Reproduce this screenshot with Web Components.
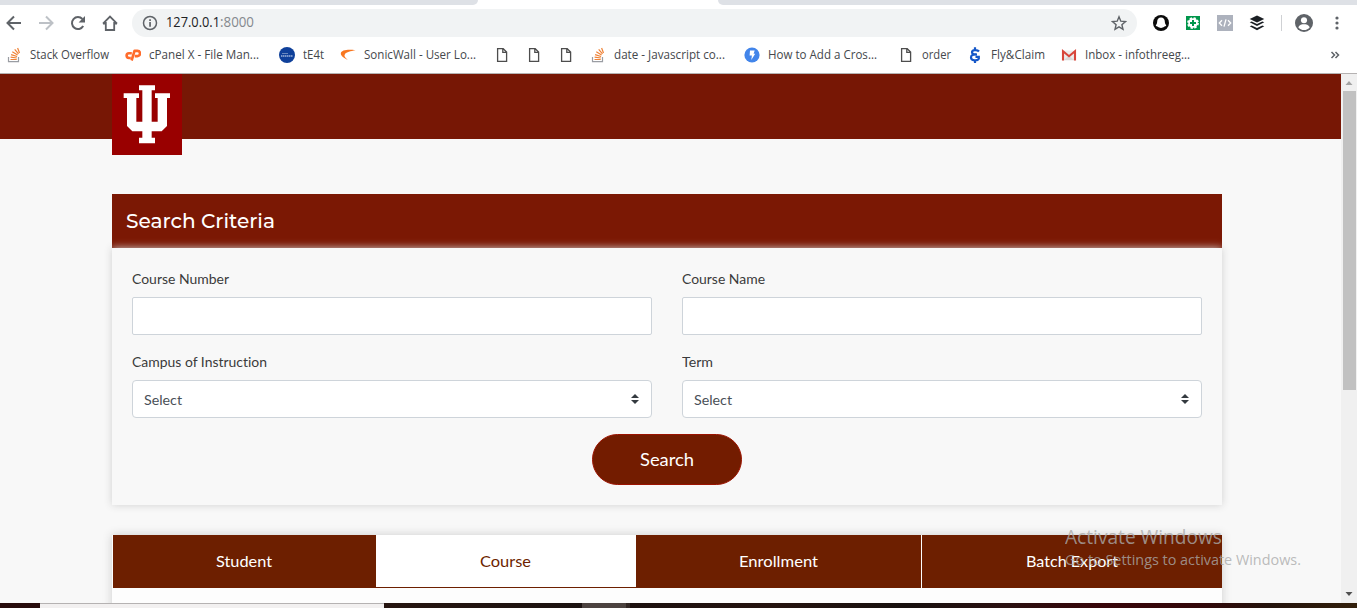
<!DOCTYPE html>
<html lang="en">
<head>
<meta charset="utf-8">
<title>Search Criteria</title>
<style>
html,body{margin:0;height:608px;overflow:hidden;background:#f8f8f8}
</style>
</head>
<body>
<app-window></app-window>
<script>
function define(name, html, setup) {
  const t = document.createElement('template');
  t.innerHTML = html;
  customElements.define(name, class extends HTMLElement {
    connectedCallback() {
      if (this.shadowRoot) return;
      const root = this.attachShadow({ mode: 'open' });
      root.append(t.content.cloneNode(true));
      if (setup) setup.call(this, root);
    }
  });
}

/* Label whose text is condensed or widened to span exactly `w` pixels. */
define('fit-label', `<style>
:host{display:inline-block;white-space:nowrap;flex:none;text-align:left;font-variant-ligatures:none}
span{display:inline-block;transform-origin:0 50%}
</style><span></span>`, function (root) {
  const s = root.querySelector('span');
  s.textContent = this.getAttribute('text');
  const w = +this.getAttribute('w');
  s.style.transform = 'scaleX(' + w / s.getBoundingClientRect().width + ')';
  this.style.width = (this.getAttribute('box') || w) + 'px';
});

const ICONS = {
  back: '<path d="M15 8H2M8 1.5 1.5 8 8 14.5" fill="none" stroke="#5f6368" stroke-width="2"/>',
  forward: '<path d="M1 8h13M8 1.5 14.5 8 8 14.5" fill="none" stroke="#bdc1c6" stroke-width="2"/>',
  reload: '<path d="M13.2 11A6 6 0 1 1 12.4 4" fill="none" stroke="#5f6368" stroke-width="2"/><path d="M15 1v6.4H8.6z" fill="#5f6368"/>',
  home: '<path d="M1 8.7 8 1.5l7 7.2M3.8 7v8h8.4V7M1 8.5h3m8 0h3" fill="none" stroke="#5f6368" stroke-width="1.8"/>',
  info: '<circle cx="8" cy="8" r="6.5" fill="none" stroke="#5f6368" stroke-width="1.5"/><path d="M7.2 4.3h1.7v1.6H7.2zM7.2 7h1.7v4.8H7.2z" fill="#5f6368"/>',
  star: '<path d="M8 1.8l1.8 4.4 4.7.4-3.6 3.1 1.1 4.6L8 11.8l-4 2.5 1.1-4.6L1.5 6.6l4.7-.4z" fill="none" stroke="#5f6368" stroke-width="1.4"/>',
  snap: '<circle cx="8" cy="8" r="8" fill="#0b0b0b"/><path d="M8 2.4c2.5 0 3.8 1.7 3.8 4 0 2.6 1.5 3.6 1.5 4.2 0 .7-2 .8-2.3 1.5-.9.1-1.6.8-3 .8s-2.100-.7-3-.8c-.3-.7-2.300-.8-2.300-1.500 0-.6 1.500-1.600 1.500-4.200 0-2.300 1.300-4 3.800-4z" fill="#fff"/>',
  green: '<path d="M1 1h14v14H1z" fill="#00964b"/><circle cx="8" cy="8" r="4.800" fill="#fff"/><circle cx="8" cy="8" r="5" fill="none" stroke="#fff" stroke-width="1.800" stroke-dasharray="2.300 1.627"/><path d="M7 5h2v2h2v2H9v2H7V9H5V7h2z" fill="#00964b"/>',
  code: '<path d="M0 0h16v16H0z" fill="#adb2bd"/><path d="M5 5.300 2.300 8 5 10.700M11 5.300 13.700 8 11 10.700M9 4.300 7 11.700" fill="none" stroke="#fff" stroke-width="1.300"/>',
  buffer: '<path d="M8 .5l7.300 3.500L8 7.500.7 4z" fill="#1b1f24"/><path d="M.7 7.300 2.700 6.400 8 9l5.300-2.600 2 .9L8 10.900zM.7 11.300l2-.9L8 13l5.300-2.600 2 .9L8 15.200z" fill="#1b1f24"/>',
  user: '<circle cx="8" cy="8" r="8" fill="#5f6368"/><circle cx="8" cy="5.500" r="2.700" fill="#fff"/><path d="M2.900 11.800c1-2.300 3.200-2.600 5.100-2.600s4.100.3 5.100 2.600C12 13.500 10 14.300 8 14.300s-4-.8-5.100-2.500z" fill="#fff"/>',
  dots: '<g fill="#5f6368"><circle cx="8" cy="3" r="1.600"/><circle cx="8" cy="8" r="1.600"/><circle cx="8" cy="13" r="1.600"/></g>',
  stack: '<path d="M2.500 10v4.700h10V10" fill="none" stroke="#9a9da3" stroke-width="1.200"/><g stroke="#ef8236" stroke-width="1.200"><path d="M4.500 12.500h6.200M4.600 10.200l6.200.8M5.100 7.600l6 1.900M6.300 4.800l5.300 3.200M8.700 2.300l3.800 4.600M11.600 1l1.900 5"/></g>',
  cpanel: '<g fill="none" stroke="#ff6c2c" stroke-width="2.600"><path d="M6.800 6.200H4A2.400 2.400 0 0 0 4 11h1.800"/><path d="M6.600 13.500 9.500 3.900h2.900a2.500 2.500 0 0 1 0 5.200h-2.600" stroke-linejoin="round"/></g>',
  globe: '<circle cx="8" cy="8" r="8" fill="#0f409a"/><path d="M3 6.500h6" stroke="#7f9ac9" stroke-width=".8"/><path d="M2 9h12" stroke="#9db2da" stroke-width="1.600" stroke-dasharray="1.500 .5"/>',
  sonic: '<path d="M15.500 3.200C8 2.300 1 2.900.8 6.600c0 2.500 3.400 4.800 7 6.200C4.900 10.700 3.600 8.700 5 6.900c1.500-2 5.500-2.800 10.500-3.700z" fill="#f8761f"/>',
  file: '<path d="M3.600 1.700h5.600l3.400 3.400v9.200h-9zM8.800 1.700v3.700h3.800" fill="none" stroke="#4d4d4d" stroke-width="1.300"/>',
  bolt: '<circle cx="8" cy="8" r="7.600" fill="#4285ea"/><path d="M6 3.500h4.700L9.600 6.800h1.600L7.300 13l.6-4.600H5.600z" fill="#fff"/>',
  fly: '<path d="M12 4.500C10.500 2.500 5 2.400 5 5.200c0 2 2 2.300 5 2.300M9.500 7.300C5.500 7.200 4 8.500 4 10.400c0 3.700 6.600 3.600 7.800 1.300V9.800H8.500M8 .3v2.800M8 13v3" fill="none" stroke="#1457c8" stroke-width="2.200"/>',
  gmail: '<path d="M2 3.500h12v10H2z" fill="#ececec"/><path d="m3 13 5-4.500 5 4.500z" fill="#d9d9d9"/><path d="M2 13.500V4.200l6 5 6-5v9.300" fill="none" stroke="#d8463b" stroke-width="2.100"/>'
};
define('ui-icon', `<style>:host{display:block;flex:none;width:16px;height:16px}svg{display:block;width:100%;height:100%}</style><svg viewBox="0 0 16 16"></svg>`, function (root) {
  root.querySelector('svg').innerHTML = ICONS[this.getAttribute('name')];
});

define('tab-strip', `<style>
:host{display:flex;height:5px;background:#fff;justify-content:space-between}
i{background:#dee1e6}
.l{width:478px;border-bottom-right-radius:5px}.r{width:639px;border-bottom-left-radius:5px}
</style><i class="l"></i><i class="r"></i>`);

define('browser-toolbar', `<style>
:host{display:flex;height:36px;align-items:center;padding:0 12px 0 6px;box-sizing:border-box;background:#fff}
.nav{display:flex;gap:16px;width:126px;flex:none}
.bar{display:flex;align-items:center;width:1005px;flex:none;height:28px;border-radius:14px;background:#f1f3f4;padding:0 10px;box-sizing:border-box;font:14px/18px "Open Sans",sans-serif;color:#202124}
.bar fit-label{margin-top:-2px}
.bar ui-icon:first-child{margin-right:8px}
.bar ui-icon:last-child{margin-left:auto}
.ext{display:flex;gap:16px;margin-left:16px;align-items:center}
.sep{width:1px;height:16px;background:#cfd1d4;margin-left:16px}
.user{width:18px;height:18px;margin-left:13px}
.dots{margin-left:16px}
</style>
<div class="nav"><ui-icon name="back"></ui-icon><ui-icon name="forward"></ui-icon><ui-icon name="reload"></ui-icon><ui-icon name="home"></ui-icon></div>
<div class="bar"><ui-icon name="info"></ui-icon><fit-label text="127.0.0.1" w="54"></fit-label><fit-label text=":8000" w="34" style="color:#85898e"></fit-label><ui-icon name="star"></ui-icon></div>
<div class="ext"><ui-icon name="snap"></ui-icon><ui-icon name="green"></ui-icon><ui-icon name="code"></ui-icon><ui-icon name="buffer"></ui-icon></div>
<span class="sep"></span><ui-icon class="user" name="user"></ui-icon><ui-icon class="dots" name="dots"></ui-icon>`);

define('book-mark', `<style>
:host{display:flex;align-items:center;gap:8px;font:12.2px/16px "Open Sans",sans-serif;color:#45484c}
</style>`, function (root) {
  const a = n => this.getAttribute(n);
  root.innerHTML += `<ui-icon name="${a('icon')}"></ui-icon>` +
    (a('text') ? `<fit-label text="${a('text').replace('&', '&amp;')}" w="${a('w')}" box="${a('box') || a('w')}"></fit-label>` : '');
});
define('bookmarks-bar', `<style>
:host{display:flex;align-items:center;gap:16px;height:33px;box-sizing:border-box;padding:0 17px 4px 6px;background:#fff;border-bottom:1px solid #b5b2b2}
svg{margin-left:auto;display:block;width:10px;height:8px}
</style>
<book-mark icon="stack" text="Stack Overflow" w="79"></book-mark>
<book-mark icon="cpanel" text="cPanel X - File Man..." w="110" box="114"></book-mark>
<book-mark icon="globe" text="tE4t" w="21"></book-mark>
<book-mark icon="sonic" text="SonicWall - User Lo..." w="112" box="114"></book-mark>
<book-mark icon="file"></book-mark><book-mark icon="file"></book-mark><book-mark icon="file"></book-mark>
<book-mark icon="stack" text="date - Javascript co..." w="111" box="114"></book-mark>
<book-mark icon="bolt" text="How to Add a Cros..." w="109" box="114"></book-mark>
<book-mark icon="file" text="order" w="29"></book-mark>
<book-mark icon="fly" text="Fly&amp;Claim" w="54"></book-mark>
<book-mark icon="gmail" text="Inbox - infothreeg..." w="105"></book-mark>
<svg viewBox="0 0 10 8"><path d="M1.500 1l3 3-3 3M5.500 1l3 3-3 3" fill="none" stroke="#5f6368" stroke-width="1.500"/></svg>`);

define('site-header', `<style>
:host{display:block;height:65px;background:#771705;padding-left:112px}
svg{display:block;position:relative;width:70px;height:81px;background:#900}
</style><svg viewBox="66 12 210 243"><path fill="#fff" d="M147 46h48v15h-10v94h18V84h-8V70h45v14h-9v84l-16 16h-30v19h10v17h-48v-17h10v-19h-30l-16-16V84h-10V70h46v14h-8v71h18V61h-10z"/></svg>`);

define('form-field', `<style>
:host{display:block;font:14px/20px Lato,sans-serif;color:#3b3b3b}
label{display:block;height:28px;margin-left:-.5px}
.box{display:flex;align-items:center;justify-content:space-between;height:38px;box-sizing:border-box;border:1px solid #ced4da;border-radius:2px;background:#fff;padding:1px 12px 0 11px;color:#495057}
.select{border-radius:4px}
svg{width:8px;height:10px;margin-top:-2px}
</style><label></label><div class="box"></div>`, function (root) {
  root.querySelector('label').innerHTML = `<fit-label text="${this.getAttribute('label')}" w="${this.getAttribute('w')}"></fit-label>`;
  if (this.hasAttribute('select')) {
    const b = root.querySelector('.box');
    b.classList.add('select');
    b.innerHTML = '<fit-label text="Select" w="38"></fit-label><svg viewBox="0 0 8 10"><path d="M0 4 4 0l4 4zM0 6l4 4 4-4z" fill="#343a40"/></svg>';
  }
});

define('search-card', `<style>
:host{display:block;margin:55px 0 0 112px;width:1110px}
h2{margin:0;height:54px;box-sizing:border-box;padding-left:14px;background:#7b1804;color:#fff;font:500 20px/54px Montserrat,Inter,sans-serif}
.body{height:257px;box-sizing:border-box;padding:21px 20px 0;background:#f8f8f8;box-shadow:0 0 8px #d0d0d0;position:relative}
.grid{display:grid;grid-template-columns:520px 520px;column-gap:30px;row-gap:17px}
button{display:block;width:150px;height:51px;margin:16px auto 0;border:1px solid #9c1300;border-radius:25.500px;background:#731c00;color:#fff;font:18px/26px Lato,sans-serif;padding:0 1px 2px 0}
</style>
<h2><fit-label text="Search Criteria" w="149"></fit-label></h2>
<div class="body"><div class="grid">
<form-field label="Course Number" w="97"></form-field><form-field label="Course Name" w="83"></form-field>
<form-field label="Campus of Instruction" w="135" select></form-field><form-field label="Term" w="31" select></form-field>
</div><button><fit-label text="Search" w="54"></fit-label></button></div>`);

define('tab-bar', `<style>
:host{display:block;margin:30px 0 0 112px;width:1110px;height:100px;background:#fdfdfd;box-shadow:0 0 9px #ccc}
nav{display:flex;height:53px;padding-left:1px;font:16px/51px Lato,sans-serif;color:#fff}
a{box-sizing:border-box;height:53px;background:#6d1f00;text-align:center}
a:nth-child(-n+2){padding-right:2px}
.on{background:#fff;color:#6d1f00;border-bottom:1px solid #6d1f00}
</style><nav>
<a style="width:263px"><fit-label text="Student" w="56"></fit-label></a>
<a class="on" style="width:260px"><fit-label text="Course" w="51"></fit-label></a>
<a style="width:285px"><fit-label text="Enrollment" w="79"></fit-label></a>
<a style="width:300px;margin-left:1px"><fit-label text="Batch Export" w="92"></fit-label></a></nav>`);

define('scroll-bar', `<style>
:host{display:flex;flex-direction:column;width:16px;flex:none;background:#f0f0f0;align-items:center}
i{width:13px;height:299px;background:#c1c1c1;margin-left:1px}
svg{display:block;width:16px;height:17px}.d{margin-top:auto}
</style><svg viewBox="0 0 16 17"><path d="M4.500 11h7L8 7z" fill="#a3a3a3"/></svg><i></i><svg class="d" viewBox="0 0 16 17"><path d="M4.500 6h7L8 10z" fill="#505050"/></svg>`);

define('task-bar', `<style>
:host{display:flex;height:5px;position:relative}
i{height:5px}
</style><i style="width:40px;background:#270b0b"></i><i style="width:344px;background:#f2f0f0;box-shadow:inset 0 1px #b5b2b2"></i><i style="width:198px;background:linear-gradient(90deg,#261510,#1b1210)"></i><i style="width:44px;background:#4b423f"></i><i style="width:4px;background:#302623"></i><i style="flex:1;background:linear-gradient(90deg,#1c100e,#25130f 20%,#17100e 38%,#2b1010 52%,#380509 65%,#330709 78%,#24130c 88%,#33200b)"></i>`);

define('activation-notice', `<style>
:host{position:absolute;left:1065px;top:524px;font-family:"Open Sans",sans-serif;color:rgba(170,170,170,.8)}
div{white-space:nowrap}
.a{font-size:19.500px;line-height:26px}.b{font-size:14.500px;line-height:20px}
</style><div class="a"><fit-label text="Activate Windows" w="157"></fit-label></div><div class="b"><fit-label text="Go to Settings to activate Windows." w="236"></fit-label></div>`);

define('app-window', `<style>
:host{display:flex;flex-direction:column;position:relative;width:1357px;height:608px;overflow:hidden}
.view{display:flex;flex:1;min-height:0}
main{flex:1;background:#f8f8f8;overflow:hidden}
</style>
<tab-strip></tab-strip><browser-toolbar></browser-toolbar><bookmarks-bar></bookmarks-bar>
<div class="view"><main><site-header></site-header><search-card></search-card><tab-bar></tab-bar></main><scroll-bar></scroll-bar></div>
<task-bar></task-bar><activation-notice></activation-notice>`);
</script>
</body>
</html>
